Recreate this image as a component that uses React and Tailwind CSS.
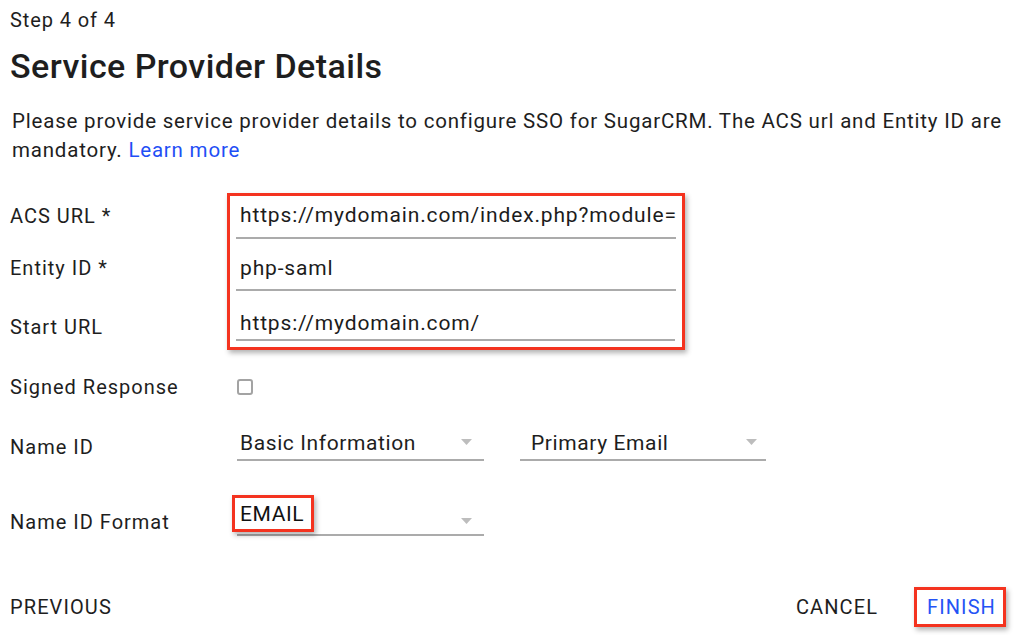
import React from "react";

function Arrow({ className = "" }) {
  return (
    <svg width="11" height="6" viewBox="0 0 11 6" className={className}>
      <path d="M0 0 L11 0 L5.5 6 Z" fill="#bdbdbd" />
    </svg>
  );
}

function TextInput({ value, className }) {
  return (
    <div className={"border-b-2 border-[#ababab] " + className}>
      <div className="pl-[4px] text-[21px] leading-[24px] tracking-[0.85px] text-[#1c1c1c] whitespace-nowrap overflow-hidden">
        {value}
      </div>
    </div>
  );
}

export default function App() {
  return (
    <div className="w-[1024px] h-[635px] overflow-hidden bg-white font-[Roboto,sans-serif] text-[#1e1e1e] pl-[10px] pr-[18px] flex flex-col">
      <div className="pt-[8px] text-[20px] leading-[24px] tracking-[0.9px]">Step 4 of 4</div>
      <h1 className="mt-[14px] text-[34px] leading-[40px] font-medium tracking-[0.45px]">Service Provider Details</h1>
      <p className="mt-[21px] ml-[2px] text-[20.5px] leading-[29px] tracking-[0.8px]">
        Please provide service provider details to configure SSO for SugarCRM. The ACS url and Entity ID are
        <br />
        mandatory. <span className="text-[#1f4ff5]">Learn more</span>
      </p>

      <div className="mt-[28px] flex">
        <div className="w-[217px] flex flex-col text-[20px] leading-[24px] tracking-[1px]">
          <span className="mt-[11px]">ACS URL *</span>
          <span className="mt-[28px]">Entity ID *</span>
          <span className="mt-[35px]">Start URL</span>
        </div>
        <div className="w-[458px] border-[3px] border-[#f4331f] shadow-[2px_3px_5px_rgba(0,0,0,0.3)] px-[6px] pb-[6px]">
          <TextInput value="https://mydomain.com/index.php?module=" className="pt-[7px] pb-[10px]" />
          <TextInput value="php-saml" className="pt-[17px] pb-[9px]" />
          <TextInput value="https://mydomain.com/" className="pt-[20px] pb-[4px] mr-[1px]" />
        </div>
      </div>

      <div className="mt-[25px] flex items-center h-[24px]">
        <div className="w-[227px] text-[20px] leading-[24px] tracking-[1px]">Signed Response</div>
        <div className="w-[16px] h-[16px] border-2 border-[#a3a3a3] rounded-[3px]" />
      </div>

      <div className="mt-[32px] flex items-start">
        <div className="w-[227px] mt-[4px] text-[20px] leading-[24px] tracking-[1px]">Name ID</div>
        <div className="w-[247px] flex items-center justify-between border-b-2 border-[#ababab] pb-[4px]">
          <span className="pl-[3px] text-[21px] leading-[24px] tracking-[0.6px]">Basic Information</span>
          <Arrow className="mr-[12px] -mt-[2px]" />
        </div>
        <div className="ml-[36px] w-[246px] flex items-center justify-between border-b-2 border-[#ababab] pb-[4px]">
          <span className="pl-[11px] text-[21px] leading-[24px] tracking-[0.6px]">Primary Email</span>
          <Arrow className="mr-[9px] -mt-[2px]" />
        </div>
      </div>

      <div className="mt-[34px] flex items-start">
        <div className="w-[227px] mt-[15px] text-[20px] leading-[24px] tracking-[1px]">Name ID Format</div>
        <div className="w-[247px] flex items-end justify-between border-b-2 border-[#ababab] pb-[2px]">
          <div className="-ml-[5px] border-[3px] border-[#f4331f] shadow-[2px_3px_5px_rgba(0,0,0,0.3)] pl-[5px] pr-[7px] pt-[4px] pb-[3px] text-[21px] leading-[24px] tracking-[0.6px] text-[#111]">
            EMAIL
          </div>
          <Arrow className="mr-[12px] mb-[8px]" />
        </div>
      </div>

      <div className="mt-[51px] flex items-center text-[20px] leading-[24px] tracking-[1.1px]">
        <span>PREVIOUS</span>
        <span className="ml-auto">CANCEL</span>
        <div className="ml-[36px] border-[3px] border-[#f4331f] shadow-[2px_3px_5px_rgba(0,0,0,0.3)] pl-[10px] pr-[7px] py-[5px] text-[#2453f5]">
          FINISH
        </div>
      </div>
    </div>
  );
}
